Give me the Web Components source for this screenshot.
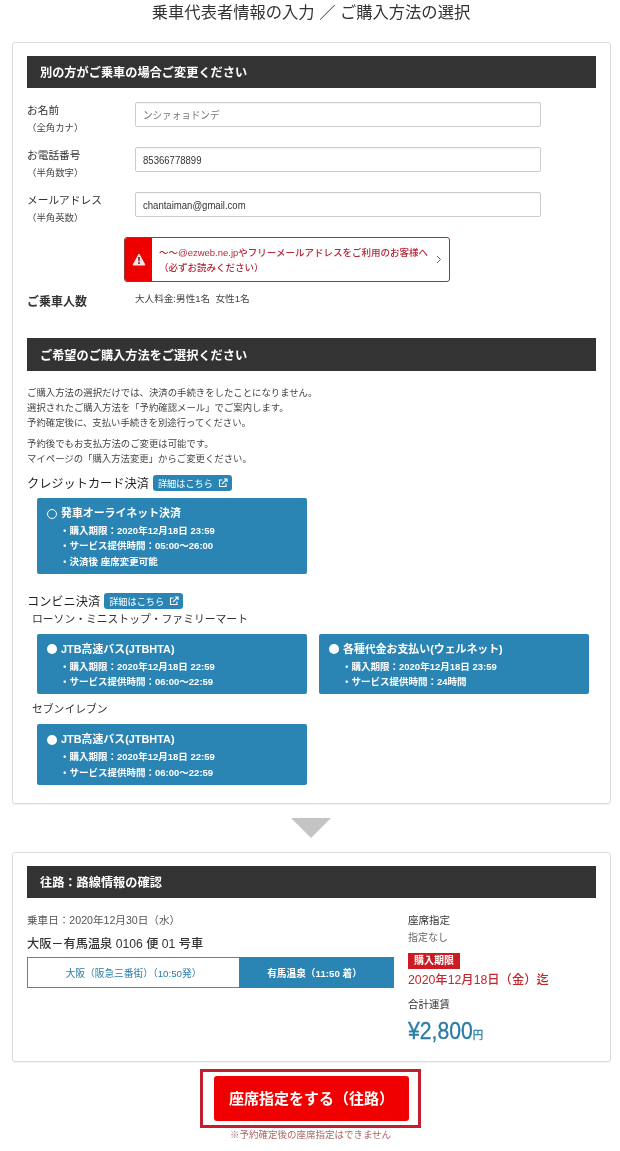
<!DOCTYPE html>
<html lang="ja">
<head>
<meta charset="utf-8">
<title>乗車代表者情報の入力</title>
<style>
  html, body { margin: 0; background: #fff; }
  body { width: 620px; font-family: "Liberation Sans", "Noto Sans CJK JP", sans-serif; color: #333; }
</style>
</head>
<body>
<booking-page>
  <page-title>乗車代表者情報の入力 ／ ご購入方法の選択</page-title>

  <page-card style="padding-bottom:18px">
    <bar-head>別の方がご乗車の場合ご変更ください</bar-head>
    <form-row label="お名前" hint="（全角カナ）" style="margin-top:14px"><span style="color:#777">ンシァォョドンデ</span></form-row>
    <form-row label="お電話番号" hint="（半角数字）" style="margin-top:20px">85366778899</form-row>
    <form-row label="メールアドレス" hint="（半角英数）" style="margin-top:20px">chantaiman@gmail.com</form-row>
    <notice-link>〜〜@ezweb.ne.jpやフリーメールアドレスをご利用のお客様へ<br>（必ずお読みください）</notice-link>
    <passenger-row label="ご乗車人数">大人料金:男性1名&nbsp; 女性1名</passenger-row>

    <bar-head style="margin-top:27px;height:33px">ご希望のご購入方法をご選択ください</bar-head>
    <info-text>
      <p>ご購入方法の選択だけでは、決済の手続きをしたことになりません。<br>選択されたご購入方法を「予約確認メール」でご案内します。<br>予約確定後に、支払い手続きを別途行ってください。</p>
      <p>予約後でもお支払方法のご変更は可能です。<br>マイページの「購入方法変更」からご変更ください。</p>
    </info-text>

    <pay-heading style="margin-top:9px">クレジットカード決済</pay-heading>
    <pay-grid style="margin-top:7px">
      <pay-option name="発車オーライネット決済" hollow>
        <li>購入期限：2020年12月18日 23:59</li>
        <li>サービス提供時間：05:00〜26:00</li>
        <li>決済後 座席変更可能</li>
      </pay-option>
    </pay-grid>

    <pay-heading style="margin-top:19px">コンビニ決済</pay-heading>
    <store-label style="margin-top:1px">ローソン・ミニストップ・ファミリーマート</store-label>
    <pay-grid style="margin-top:6px">
      <pay-option name="JTB高速バス(JTBHTA)">
        <li>購入期限：2020年12月18日 22:59</li>
        <li>サービス提供時間：06:00〜22:59</li>
      </pay-option>
      <pay-option name="各種代金お支払い(ウェルネット)">
        <li>購入期限：2020年12月18日 23:59</li>
        <li>サービス提供時間：24時間</li>
      </pay-option>
    </pay-grid>
    <store-label style="margin-top:6px">セブンイレブン</store-label>
    <pay-grid style="margin-top:6px">
      <pay-option name="JTB高速バス(JTBHTA)">
        <li>購入期限：2020年12月18日 22:59</li>
        <li>サービス提供時間：06:00〜22:59</li>
      </pay-option>
    </pay-grid>
  </page-card>

  <down-arrow></down-arrow>

  <page-card>
    <bar-head>往路：路線情報の確認</bar-head>
    <trip-summary></trip-summary>
  </page-card>

  <seat-button note="※予約確定後の座席指定はできません">座席指定をする（往路）</seat-button>
</booking-page>

<script>
// small helper so every component just declares its css + markup
function define(tag, css, html) {
  customElements.define(tag, class extends HTMLElement {
    constructor() {
      super();
      this.attachShadow({ mode: 'open' });
    }
    connectedCallback() {
      this.shadowRoot.innerHTML = `<style>${css}</style>${typeof html === 'function' ? html(this) : html}`;
    }
  });
}

const JP = '"Liberation Sans", "Noto Sans CJK JP", sans-serif';

define('booking-page', `:host { display: block; width: 620px; height: 1151px; overflow: hidden; font-family: ${JP}; filter: blur(.25px); }`, `<slot></slot>`);

define('page-title', `
  :host { display: block; height: 42px; box-sizing: border-box; padding-left: 2px; text-align: center; font-size: 16.3px; line-height: 25px; color: #333; white-space: nowrap; }
`, `<slot></slot>`);

define('page-card', `
  :host { display: block; box-sizing: border-box; margin-left: 12px; width: 599px; padding: 13px 14px 13px; background: #fff; border: 1px solid #dcdcdc; border-radius: 3px; box-shadow: 0 1px 1px rgba(0,0,0,.05); }
`, `<slot></slot>`);

define('bar-head', `
  :host { display: flex; align-items: center; box-sizing: border-box; height: 32px; padding-left: 13px; background: #333; color: #fff; font-size: 12.2px; font-weight: 700; }
`, `<slot></slot>`);

define('form-row', `
  :host { display: flex; height: 25px; font-size: 10.5px; color: #333; }
  .label { width: 108px; flex: none; line-height: 16px; }
  .label b { display: block; font-weight: 400; font-size: 10.7px; }
  .label span { display: block; font-size: 9.4px; line-height: 20px; color: #444; white-space: nowrap; }
  .field { width: 406px; height: 25px; box-sizing: border-box; border: 1px solid #ccc; border-radius: 2px; padding: 0 7px; display: flex; align-items: center; color: #333; background: #fff; box-shadow: inset 0 1px 1px rgba(0,0,0,.04); }
  .value { display: inline-block; transform: scaleX(.91); transform-origin: left center; white-space: nowrap; }
`, (el) => `
  <div class="label"><b>${el.getAttribute('label')}</b><span>${el.getAttribute('hint')}</span></div>
  <div class="field"><span class="value"><slot></slot></span></div>
`);

define('notice-link', `
  :host { display: flex; box-sizing: border-box; margin: 20px 0 0 97px; width: 326px; height: 45px; border: 1px solid #8c3a3a; border-radius: 3px; overflow: hidden; background: #fff; }
  .icon { flex: none; width: 27px; background: #ee0000; display: flex; align-items: center; justify-content: center; }
  .text { flex: 1; padding-left: 7px; font-size: 9.5px; line-height: 15px; color: #b5293a; font-weight: 500; align-self: center; white-space: nowrap; }
  .chev { flex: none; width: 24px; display: flex; align-items: center; justify-content: center; padding-right: 2px; box-sizing: border-box; }
`, `
  <div class="icon"><svg width="14" height="13" viewBox="0 0 14 13"><path fill="#f4e6e6" stroke="#f4e6e6" stroke-linejoin="round" d="M7 1 13 12H1z"/><path fill="#7a1a1a" d="M6.1 4h1.8l-.3 4.4H6.4zM6.2 9.3h1.6v1.6H6.2z"/></svg></div>
  <div class="text"><slot></slot></div>
  <div class="chev"><svg width="6" height="9" viewBox="0 0 6 9"><path fill="none" stroke="#666" stroke-width="1" d="M1 1l3.5 3.5L1 8"/></svg></div>
`);

define('passenger-row', `
  :host { display: flex; margin-top: 9px; height: 20px; color: #333; }
  b { width: 108px; flex: none; margin-top: 1px; font-size: 12px; font-weight: 700; line-height: 20px; }
  span { font-size: 9.6px; line-height: 16px; color: #444; white-space: nowrap; }
`, (el) => `<b>${el.getAttribute('label')}</b><span><slot></slot></span>`);

define('info-text', `
  :host { display: block; margin-top: 14px; font-size: 9.4px; line-height: 15px; color: #444; }
  ::slotted(p) { margin: 0 0 6px; }
`, `<slot></slot>`);

define('pay-heading', `
  :host { display: flex; align-items: center; height: 16px; font-size: 12.2px; color: #222; white-space: nowrap; }
  a { display: inline-flex; align-items: center; gap: 5px; height: 16px; margin-left: 4px; padding: 0 4px 0 5px; background: #2a85b5; color: #fff; font-size: 9.2px; border-radius: 3px; text-decoration: none; }
`, `<slot></slot><a href="#">詳細はこちら<svg width="10" height="10" viewBox="0 0 10 10" fill="none" stroke="#fff" stroke-width="1.1"><path d="M4.5 2H1.5v6.5H8V5.5"/><path d="M4 6 8.8 1.2M6 1h3v3"/></svg></a>`);

define('store-label', `
  :host { display: block; margin-left: 5px; height: 18px; line-height: 18px; font-size: 10.8px; color: #333; white-space: nowrap; }
`, `<slot></slot>`);

define('pay-grid', `
  :host { display: grid; grid-template-columns: 270px 270px; column-gap: 12px; padding-left: 10px; }
`, `<slot></slot>`);

define('pay-option', `
  :host { display: block; box-sizing: border-box; padding: 8px 10px 5px; background: #2a85b5; border-radius: 2px; color: #fff; font-weight: 700; }
  .name { display: flex; align-items: center; gap: 4px; font-size: 10.9px; line-height: 15px; white-space: nowrap; }
  .dot { width: 10px; height: 10px; border-radius: 50%; background: #fff; flex: none; }
  :host([hollow]) .dot { box-sizing: border-box; background: transparent; border: 1.3px solid #fff; }
  ul { list-style: none; margin: 2px 0 0; padding: 0 0 0 13px; font-size: 9.5px; line-height: 15.3px; white-space: nowrap; }
  ::slotted(li)::before { content: "・"; }
`, (el) => `
  <div class="name"><span class="dot"></span>${el.getAttribute('name')}</div>
  <ul><slot></slot></ul>
`);

define('down-arrow', `
  :host { display: flex; justify-content: center; padding: 14px 0 14px 2px; }
  i { width: 0; height: 0; border-left: 20px solid transparent; border-right: 20px solid transparent; border-top: 20px solid #c4c4c4; }
`, `<i></i>`);

define('trip-summary', `
  :host { display: flex; height: 136px; margin-top: 14px; color: #333; }
  .left { width: 367px; flex: none; }
  .right { margin-left: 14px; }
  .date { font-size: 10.6px; line-height: 17px; color: #555; white-space: nowrap; }
  .line { margin-top: 7px; font-size: 12.2px; line-height: 17px; font-weight: 500; white-space: nowrap; }
  .route { display: flex; margin-top: 4px; height: 31px; box-sizing: border-box; font-size: 9.7px; }
  .route div { display: flex; align-items: center; justify-content: center; box-sizing: border-box; white-space: nowrap; }
  .from { width: 212px; border: 1px solid #4d8bad; border-right: 0; color: #2a7ba6; }
  .to { flex: 1; background: #2a85b5; color: #fff; font-weight: 700; padding-right: 4px; }
  .head { font-size: 10.5px; line-height: 17px; }
  .none { font-size: 10px; line-height: 17px; color: #666; }
  .limit { display: inline-block; margin-top: 7px; height: 16px; line-height: 16px; padding: 0 6px; background: #cb1b23; color: #fff; font-size: 10px; font-weight: 700; vertical-align: top; }
  .until { margin-top: 1px; font-size: 12.3px; line-height: 21px; color: #c1272d; font-weight: 500; white-space: nowrap; }
  .total { margin-top: 5px; }
  .price { display: inline-block; margin-top: 3px; color: #2a7ba6; font-size: 23.5px; line-height: 30px; font-weight: 400; -webkit-text-stroke: .3px #2a7ba6; white-space: nowrap; transform: scaleX(.9); transform-origin: left center; }
  .price small { font-size: 11.5px; }
`, `
  <div class="left">
    <div class="date">乗車日：2020年12月30日（水）</div>
    <div class="line">大阪－有馬温泉 0106 便 01 号車</div>
    <div class="route">
      <div class="from">大阪（阪急三番街）（10:50発）</div>
      <div class="to">有馬温泉（11:50 着）</div>
    </div>
  </div>
  <div class="right">
    <div class="head">座席指定</div>
    <div class="none">指定なし</div>
    <div><span class="limit">購入期限</span></div>
    <div class="until">2020年12月18日（金）迄</div>
    <div class="head total">合計運賃</div>
    <div class="price">¥2,800<small>円</small></div>
  </div>
`);

define('seat-button', `
  :host { display: block; margin-top: 7px; padding-left: 1px; text-align: center; }
  .frame { display: inline-block; box-sizing: border-box; width: 221px; height: 59px; padding: 4px 9px 4px 11px; border: 3px solid #c21f30; background: #fff; vertical-align: top; }
  a { display: flex; align-items: center; justify-content: center; box-sizing: border-box; height: 45px; padding-bottom: 2px; background: #f00000; border-radius: 3px; color: #fff; font-size: 15px; font-weight: 700; text-decoration: none; white-space: nowrap; }
  p { margin: 0; font-size: 9.5px; line-height: 14px; color: #a66; }
`, (el) => `
  <div class="frame"><a href="#"><slot></slot></a></div>
  <p>${el.getAttribute('note')}</p>
`);
</script>
</body>
</html>
